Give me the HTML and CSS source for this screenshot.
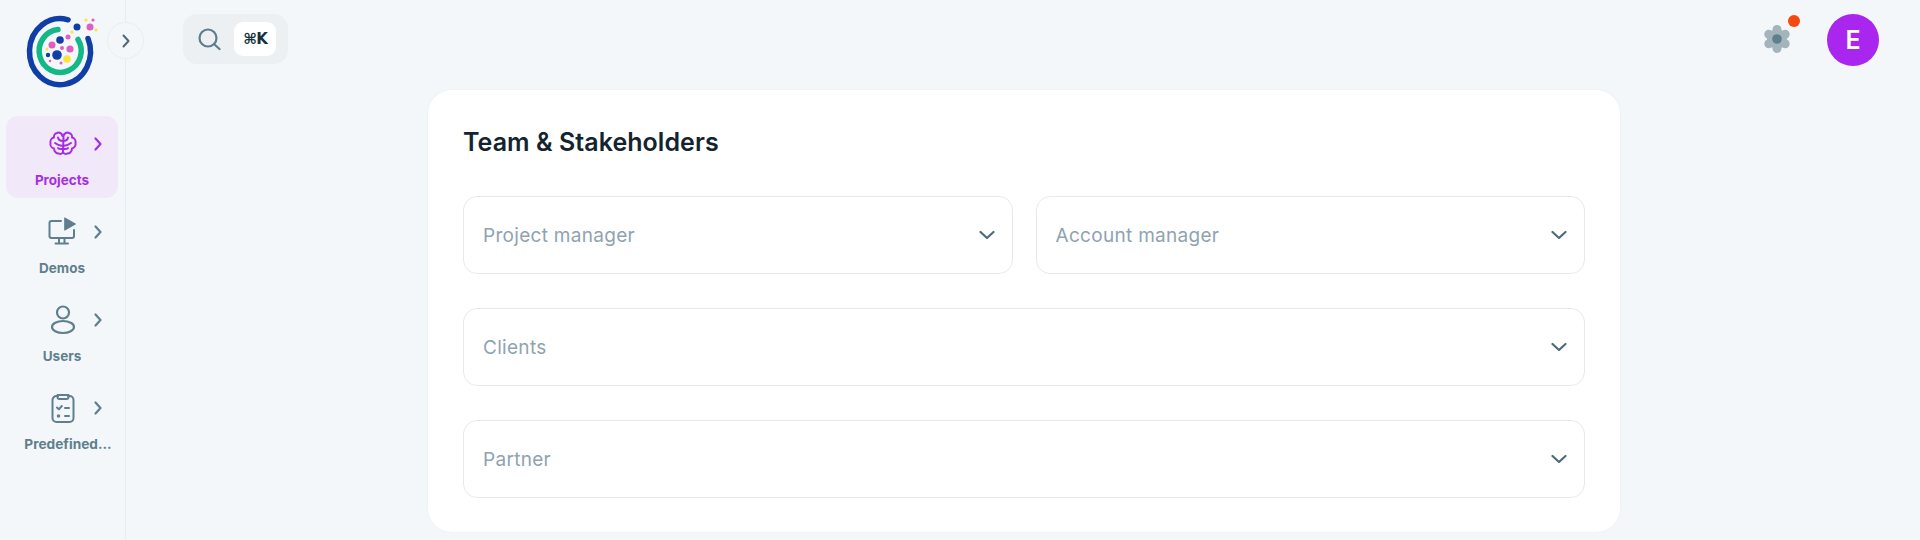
FILE: index.html
```html
<!DOCTYPE html>
<html lang="en">
<head>
<meta charset="utf-8">
<title>Team &amp; Stakeholders</title>
<link rel="stylesheet" href="styles.css">
</head>
<body>
<div class="app">
  <aside class="sidebar">
    <div class="logo-wrap">
      <svg class="logo" width="72" height="76" viewBox="0 0 72 76">
        <path d="M40 5.800 A30.500 33 0 1 0 60 24.600" fill="none" stroke="#0f3fa6" stroke-width="5.500" stroke-linecap="round"/>
        <path d="M30 15.500 A21 21.500 0 1 0 50 25.500" fill="none" stroke="#12b886" stroke-width="5.500" stroke-linecap="round"/>
        <circle cx="49" cy="13" r="3.500" fill="#0f3fa6"/><circle cx="62" cy="13" r="3.500" fill="#de5fc0"/>
        <circle cx="58" cy="6" r="1.600" fill="#ffe23a"/><circle cx="65" cy="6" r="1.600" fill="#de5fc0"/><circle cx="68" cy="16" r="1.600" fill="#ffe23a"/>
        <circle cx="44" cy="18" r="1.600" fill="#ffe23a"/><circle cx="40" cy="23" r="2.500" fill="#de5fc0"/>
        <circle cx="32" cy="26" r="3.800" fill="#0f3fa6"/><circle cx="24" cy="31" r="3.500" fill="#de5fc0"/>
        <circle cx="42" cy="35" r="3.600" fill="#de5fc0"/><circle cx="34" cy="34" r="2" fill="#de5fc0"/>
        <circle cx="29" cy="41" r="4.800" fill="#0f3fa6"/><circle cx="20" cy="41" r="2.200" fill="#0f3fa6"/>
        <circle cx="39" cy="45" r="3.800" fill="#ffe23a"/><circle cx="33" cy="49" r="1.500" fill="#de5fc0"/>
        <circle cx="22" cy="47" r="1.300" fill="#de5fc0"/><circle cx="19" cy="35" r="1.500" fill="#ffe23a"/>
      </svg>
    </div>
    <nav class="nav">
      <a class="nav-item active">
        <span class="nav-top">
          <svg class="nav-icon" viewBox="0 0 32 32" fill="none" stroke="currentColor" stroke-width="2" stroke-linecap="round" stroke-linejoin="round"><path d="M15.500 8 C15 5 12 4 10 5 C7.500 5.500 6.500 8 7 9.500 C4.500 10 3 12.500 3.500 15 C3 17.500 4.500 20 7 20.500 C7 23.500 9.500 26 12 25.500 C13.500 26.500 15.500 25.500 16 24 C16.500 25.500 18.500 26.500 20 25.500 C22.500 26 25 23.500 25 20.500 C27.500 20 29 17.500 28.500 15 C29 12.500 27.500 10 25 9.500 C25.500 8 24.500 5.500 22 5 C20 4 17 5 16.500 8 L16 24"/><path d="M16 13 C13.500 13 11.500 12 11 9.500 M16 18 C13 18 10.500 17 8 15 M16 21 C14 21 12 21.500 11 20 M16 13 C18.500 13 20.500 12 21 9.500 M16 18 C19 18 21.500 17 24 15 M16 21 C18 21 20 21.500 21 20"/></svg>
          <svg class="nav-chevron" viewBox="0 0 12 16" fill="none" stroke="currentColor" stroke-width="2.200" stroke-linecap="round" stroke-linejoin="round"><path d="M3.500 2.500 L8.500 8 L3.500 13.500"/></svg>
        </span>
        <span class="nav-label">Projects</span>
      </a>
      <a class="nav-item">
        <span class="nav-top">
          <svg class="nav-icon" viewBox="0 0 32 32" fill="none" stroke="currentColor" stroke-width="2" stroke-linecap="round" stroke-linejoin="round"><path d="M14 5 H4.500 A2 2 0 0 0 2.500 7 V20 A2 2 0 0 0 4.500 22 H25 A2 2 0 0 0 27 20 V14"/><path d="M12 22 V27.500 M8.500 27.500 H21 M17.500 22 V27.500"/><path d="M18 2 L28.500 8 L18 14 Z" fill="currentColor" stroke-width="1"/></svg>
          <svg class="nav-chevron" viewBox="0 0 12 16" fill="none" stroke="currentColor" stroke-width="2.200" stroke-linecap="round" stroke-linejoin="round"><path d="M3.500 2.500 L8.500 8 L3.500 13.500"/></svg>
        </span>
        <span class="nav-label">Demos</span>
      </a>
      <a class="nav-item">
        <span class="nav-top">
          <svg class="nav-icon" viewBox="0 0 32 32" fill="none" stroke="currentColor" stroke-width="2.200" stroke-linecap="round"><circle cx="16" cy="8.500" r="6"/><ellipse cx="16" cy="23" rx="11" ry="6"/></svg>
          <svg class="nav-chevron" viewBox="0 0 12 16" fill="none" stroke="currentColor" stroke-width="2.200" stroke-linecap="round" stroke-linejoin="round"><path d="M3.500 2.500 L8.500 8 L3.500 13.500"/></svg>
        </span>
        <span class="nav-label">Users</span>
      </a>
      <a class="nav-item">
        <span class="nav-top">
          <svg class="nav-icon" viewBox="0 0 32 32" fill="none" stroke="currentColor" stroke-width="2" stroke-linecap="round" stroke-linejoin="round"><path d="M11 4 H9.500 A4 4 0 0 0 5.500 8 V26 A4 4 0 0 0 9.500 30 H22.500 A4 4 0 0 0 26.500 26 V8 A4 4 0 0 0 22.500 4 H21"/><path d="M10.500 3 H21.500 V5 A2 2 0 0 1 19.500 7 H12.500 A2 2 0 0 1 10.500 5 Z"/><path d="M10 15.500 L11.800 17.300 L14.800 14 M18 16 H22 M18 24 H22"/><circle cx="11.500" cy="24" r="0.800"/></svg>
          <svg class="nav-chevron" viewBox="0 0 12 16" fill="none" stroke="currentColor" stroke-width="2.200" stroke-linecap="round" stroke-linejoin="round"><path d="M3.500 2.500 L8.500 8 L3.500 13.500"/></svg>
        </span>
        <span class="nav-label nav-label-long">Predefined...</span>
      </a>
    </nav>
    <button class="collapse" type="button">
      <svg width="12" height="16" viewBox="0 0 12 16" fill="none" stroke="#4d6b78" stroke-width="2" stroke-linecap="round" stroke-linejoin="round"><path d="M3.500 2.500 L8.500 8 L3.500 13.500"/></svg>
    </button>
  </aside>
  <div class="main">
    <header class="topbar">
      <div class="search">
        <svg width="24" height="24" viewBox="0 0 24 24" fill="none" stroke="#5c7d8c" stroke-width="2.200" stroke-linecap="round"><circle cx="11" cy="11" r="8.500"/><path d="M17.500 17.500 L22.500 22"/></svg>
        <kbd class="kbd">⌘K</kbd>
      </div>
      <div class="actions">
        <div class="gear">
          <svg width="32" height="32" viewBox="0 0 32 32"><g fill="#a3b4bd"><circle cx="16" cy="16" r="10"/><circle cx="16" cy="6.500" r="4.500"/><circle cx="16" cy="25.500" r="4.500"/><circle cx="7.800" cy="11.300" r="4.500"/><circle cx="24.200" cy="11.300" r="4.500"/><circle cx="7.800" cy="20.700" r="4.500"/><circle cx="24.200" cy="20.700" r="4.500"/></g><circle cx="16" cy="16" r="4.800" fill="#5f7f8d"/></svg>
          <span class="dot"></span>
        </div>
        <div class="avatar">E</div>
      </div>
    </header>
    <section class="card">
      <h2 class="card-title">Team &amp; Stakeholders</h2>
      <div class="fields">
        <div class="field"><span class="placeholder">Project manager</span><svg class="chev" width="16" height="10" viewBox="0 0 16 10" fill="none" stroke="#4d6b78" stroke-width="2.200" stroke-linecap="round" stroke-linejoin="round"><path d="M1.500 2 L8 8 L14.500 2"/></svg></div>
        <div class="field"><span class="placeholder">Account manager</span><svg class="chev" width="16" height="10" viewBox="0 0 16 10" fill="none" stroke="#4d6b78" stroke-width="2.200" stroke-linecap="round" stroke-linejoin="round"><path d="M1.500 2 L8 8 L14.500 2"/></svg></div>
        <div class="field wide"><span class="placeholder">Clients</span><svg class="chev" width="16" height="10" viewBox="0 0 16 10" fill="none" stroke="#4d6b78" stroke-width="2.200" stroke-linecap="round" stroke-linejoin="round"><path d="M1.500 2 L8 8 L14.500 2"/></svg></div>
        <div class="field wide"><span class="placeholder">Partner</span><svg class="chev" width="16" height="10" viewBox="0 0 16 10" fill="none" stroke="#4d6b78" stroke-width="2.200" stroke-linecap="round" stroke-linejoin="round"><path d="M1.500 2 L8 8 L14.500 2"/></svg></div>
      </div>
    </section>
  </div>
</div>
</body>
</html>
```
FILE: styles.css
```css
* { box-sizing: border-box; }
html, body { margin: 0; height: 100%; }
body {
  background: #f3f7fa;
  font-family: "Inter", "Liberation Sans", sans-serif;
  color: #4d6b78;
  overflow: hidden;
}
.app { display: flex; height: 540px; overflow: hidden; }
.sidebar {
  position: relative;
  flex: 0 0 126px;
  border-right: 1px solid #e7ecef;
  padding: 0 7px 0 6px;
}
.logo-wrap { height: 116px; padding: 14px 0 0 22px; }
.logo { display: block; overflow: visible; }
.nav { display: flex; flex-direction: column; gap: 6px; }
.nav-item {
  height: 82px;
  border-radius: 12px;
  display: flex;
  flex-direction: column;
  align-items: center;
  color: #5f7f8d;
}
.nav-item.active { background: #f1e9f9; color: #a52fe0; }
.nav-top {
  display: flex;
  align-items: center;
  height: 55px;
  padding-left: 27px;
  gap: 13px;
}
.nav-icon { width: 32px; height: 32px; }
.nav-chevron { width: 12px; height: 16px; }
.nav-label {
  font-size: 13.500px;
  font-weight: 700;
  line-height: 18px;
  white-space: nowrap;
}
.nav-label-long { margin-left: 12px; font-size: 13.700px; }
.collapse {
  position: absolute;
  left: 107px;
  top: 22px;
  width: 37px;
  height: 37px;
  border-radius: 50%;
  border: 1px solid #e9eef1;
  background: #f3f7fa;
  display: flex;
  align-items: center;
  justify-content: center;
  padding: 0;
}
.main { flex: 1; display: flex; flex-direction: column; align-items: center; min-width: 0; }
.topbar {
  align-self: stretch;
  flex: 0 0 90px;
  display: flex;
  justify-content: space-between;
  padding: 14px 41px 0 57px;
}
.search {
  width: 105px;
  height: 50px;
  border-radius: 14px;
  background: #ecf0f3;
  display: flex;
  align-items: center;
  gap: 13px;
  padding-left: 14px;
}
.kbd {
  width: 42px;
  height: 34px;
  border-radius: 9px;
  background: #fff;
  color: #14313f;
  font-family: "DejaVu Sans", sans-serif;
  font-size: 15px;
  font-weight: 700;
  letter-spacing: -1px;
  display: flex;
  align-items: center;
  justify-content: center;
}
.actions { display: flex; align-items: flex-start; gap: 34px; }
.gear { position: relative; width: 32px; height: 32px; margin-top: 9px; }
.gear svg { display: block; }
.dot {
  position: absolute;
  right: -7px;
  top: -8px;
  width: 12px;
  height: 12px;
  border-radius: 50%;
  background: #f4490f;
}
.avatar {
  width: 52px;
  height: 52px;
  border-radius: 50%;
  background: #a826ee;
  color: #fff;
  font-size: 25px;
  font-weight: 600;
  display: flex;
  align-items: center;
  justify-content: center;
}
.card {
  width: 1192px;
  height: 442px;
  flex: none;
  margin-left: 2px;
  background: #fff;
  border-radius: 24px;
  padding: 35px 35px;
  box-shadow: 0 0 2px rgba(145, 158, 171, .12);
}
.card-title {
  margin: 0 0 37px;
  font-size: 25px;
  letter-spacing: .05px;
  line-height: 34px;
  font-weight: 600;
  color: #14242e;
}
.fields { display: grid; grid-template-columns: 1fr 1fr; gap: 34px 23px; }
.field {
  height: 78px;
  border: 1px solid #e6eaee;
  border-radius: 14px;
  display: flex;
  align-items: center;
  justify-content: space-between;
  padding: 0 17px 0 19px;
}
.field.wide { grid-column: 1 / -1; }
.placeholder { font-size: 19px; letter-spacing: .3px; color: #8fa3b0; }
.chev { display: block; }
```
